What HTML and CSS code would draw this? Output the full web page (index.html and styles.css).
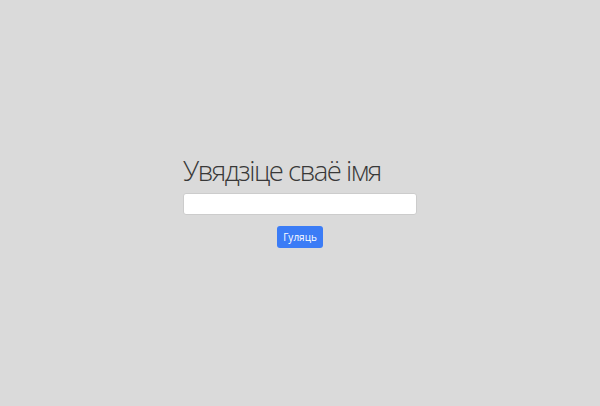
FILE: index.html
```html
<!DOCTYPE html>
<html lang="be">
<head>
<meta charset="utf-8">
<link rel="stylesheet" href="styles.css">
</head>
<body>
<main class="page">
  <form class="form">
    <h1 class="title">Увядзіце сваё імя</h1>
    <input class="name-input" type="text">
    <button class="btn" type="button">Гуляць</button>
  </form>
</main>
</body>
</html>
```
FILE: styles.css
```css
html, body {
  margin: 0;
  padding: 0;
  height: 100%;
}
body {
  background: #dadada;
  font-family: "Open Sans", "DejaVu Sans", sans-serif;
}
.page {
  height: 100%;
  display: flex;
  align-items: center;
  justify-content: center;
}
.form {
  width: 234px;
  display: flex;
  flex-direction: column;
  align-items: center;
  margin-top: -4px;
}
.title {
  align-self: flex-start;
  margin: 0 0 5px 0;
  font-family: "Open Sans", sans-serif;
  font-size: 27.5px;
  font-weight: 300;
  letter-spacing: -1.5px;
  color: #383838;
  line-height: 34px;
  white-space: nowrap;
}
.name-input {
  box-sizing: border-box;
  width: 234px;
  height: 22px;
  margin: 0;
  border: 1px solid #ccc;
  border-radius: 3px;
  background: #fff;
  padding: 0 6px;
}
.btn {
  margin-top: 11px;
  box-sizing: border-box;
  width: 46px;
  height: 22px;
  border: none;
  border-radius: 3px;
  background: #3b7cf6;
  color: #fff;
  font-family: "Open Sans", sans-serif;
  font-size: 10px;
  padding: 0;
}
```
